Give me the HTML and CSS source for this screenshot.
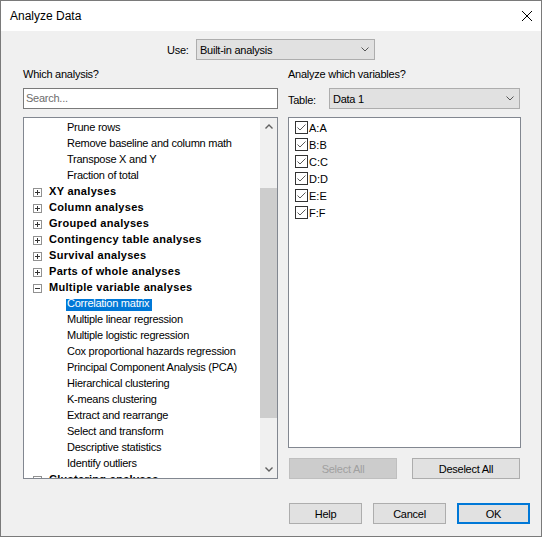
FILE: index.html
```html
<!DOCTYPE html>
<html lang="en">
<head>
<meta charset="UTF-8">
<meta name="viewport" content="width=device-width, initial-scale=1.0">
<title>Analyze Data</title>
<link rel="stylesheet" href="styles.css">
</head>
<body>
<svg class="defs" width="0" height="0">
  <symbol id="plus" viewBox="0 0 9 9">
    <rect x="0.5" y="0.5" width="8" height="8" fill="#fff" stroke="#919191"/>
    <path d="M2 4.5H7M4.5 2V7" stroke="#333"/>
  </symbol>
  <symbol id="minus" viewBox="0 0 9 9">
    <rect x="0.5" y="0.5" width="8" height="8" fill="#fff" stroke="#919191"/>
    <path d="M2 4.5H7" stroke="#333"/>
  </symbol>
  <symbol id="check" viewBox="0 0 13 13">
    <rect x="0.5" y="0.5" width="12" height="12" fill="#fff" stroke="#333"/>
    <path d="M2.5 6.5L5 9L10.5 3.5" fill="none" stroke="#5a5a5a"/>
  </symbol>
  <symbol id="chevron" viewBox="0 0 8 5">
    <path d="M0.5 0.5L4 4L7.5 0.5" fill="none" stroke="#555"/>
  </symbol>
</svg>

<div class="window">
  <div class="titlebar">
    <span class="title">Analyze Data</span>
    <svg class="close" width="10" height="10" viewBox="0 0 10 10"><path d="M0 0L10 10M10 0L0 10" stroke="#000"/></svg>
  </div>

  <div class="dialog">
    <div class="use-row">
      <span class="use-label">Use:</span>
      <div class="combo combo-use">
        <span>Built-in analysis</span>
        <svg width="8" height="5"><use href="#chevron"/></svg>
      </div>
    </div>

    <div class="columns">
      <div class="col-left">
        <div class="caption">Which analysis?</div>
        <div class="search">Search...</div>
        <div class="tree">
          <ul class="tree-items">
            <li class="child">Prune rows</li>
            <li class="child">Remove baseline and column math</li>
            <li class="child">Transpose X and Y</li>
            <li class="child">Fraction of total</li>
            <li class="group"><svg width="9" height="9"><use href="#plus"/></svg>XY analyses</li>
            <li class="group"><svg width="9" height="9"><use href="#plus"/></svg>Column analyses</li>
            <li class="group"><svg width="9" height="9"><use href="#plus"/></svg>Grouped analyses</li>
            <li class="group"><svg width="9" height="9"><use href="#plus"/></svg>Contingency table analyses</li>
            <li class="group"><svg width="9" height="9"><use href="#plus"/></svg>Survival analyses</li>
            <li class="group"><svg width="9" height="9"><use href="#plus"/></svg>Parts of whole analyses</li>
            <li class="group"><svg width="9" height="9"><use href="#minus"/></svg>Multiple variable analyses</li>
            <li class="child"><span class="selected">Correlation matrix</span></li>
            <li class="child">Multiple linear regression</li>
            <li class="child">Multiple logistic regression</li>
            <li class="child">Cox proportional hazards regression</li>
            <li class="child">Principal Component Analysis (PCA)</li>
            <li class="child">Hierarchical clustering</li>
            <li class="child">K-means clustering</li>
            <li class="child">Extract and rearrange</li>
            <li class="child">Select and transform</li>
            <li class="child">Descriptive statistics</li>
            <li class="child">Identify outliers</li>
            <li class="group"><svg width="9" height="9"><use href="#plus"/></svg>Clustering analyses</li>
          </ul>
          <div class="scrollbar">
            <div class="sb-btn"><svg width="8" height="5" viewBox="0 0 8 5"><path d="M0.5 4.5L4 1L7.5 4.5" fill="none" stroke="#606060" stroke-width="1.4"/></svg></div>
            <div class="sb-track"><div class="sb-thumb"></div></div>
            <div class="sb-btn"><svg width="8" height="5" viewBox="0 0 8 5"><path d="M0.5 0.5L4 4L7.5 0.5" fill="none" stroke="#606060" stroke-width="1.4"/></svg></div>
          </div>
        </div>
      </div>

      <div class="col-right">
        <div class="caption">Analyze which variables?</div>
        <div class="table-row">
          <span class="table-label">Table:</span>
          <div class="combo combo-table">
            <span>Data 1</span>
            <svg width="8" height="5"><use href="#chevron"/></svg>
          </div>
        </div>
        <div class="varlist">
          <div class="var"><svg width="13" height="13"><use href="#check"/></svg>A:A</div>
          <div class="var"><svg width="13" height="13"><use href="#check"/></svg>B:B</div>
          <div class="var"><svg width="13" height="13"><use href="#check"/></svg>C:C</div>
          <div class="var"><svg width="13" height="13"><use href="#check"/></svg>D:D</div>
          <div class="var"><svg width="13" height="13"><use href="#check"/></svg>E:E</div>
          <div class="var"><svg width="13" height="13"><use href="#check"/></svg>F:F</div>
        </div>
        <div class="list-buttons">
          <button class="btn btn-wide" disabled>Select All</button>
          <button class="btn btn-wide">Deselect All</button>
        </div>
      </div>
    </div>

    <div class="footer">
      <button class="btn">Help</button>
      <button class="btn">Cancel</button>
      <button class="btn btn-ok">OK</button>
    </div>
  </div>
</div>
</body>
</html>
```

FILE: styles.css
```css
* {
  box-sizing: border-box;
}
body {
  margin: 0;
  font-family: "Liberation Sans", Arial, sans-serif;
  font-size: 11px;
  color: #000;
  background: #fff;
}
.defs {
  position: absolute;
}
.window {
  width: 542px;
  height: 537px;
  border: 1px solid #7a7a7a;
  background: #f0f0f0;
  display: flex;
  flex-direction: column;
}
.titlebar {
  height: 30px;
  background: #fff;
  display: flex;
  align-items: center;
  padding-left: 9px;
}
.title {
  flex: 1;
  font-size: 12px;
}
.close {
  margin-right: 9px;
}
.dialog {
  flex: 1;
  padding-top: 8px;
}
.use-row {
  display: flex;
  align-items: center;
  height: 21px;
  padding-left: 166px;
}
.use-label {
  width: 29px;
  letter-spacing: -0.25px;
}
.combo {
  height: 21px;
  display: flex;
  align-items: center;
  justify-content: space-between;
  background: #e1e1e1;
  border: 1px solid #adadad;
  padding: 0 5px 0 3px;
  letter-spacing: -0.25px;
}
.combo-use {
  width: 179px;
}
.combo-table {
  width: 191px;
}
.columns {
  display: flex;
  gap: 10px;
  padding-left: 22px;
}
.col-left {
  width: 255px;
}
.col-right {
  width: 233px;
}
.caption {
  margin-top: 7px;
  height: 14px;
  line-height: 14px;
  letter-spacing: -0.25px;
}
.search {
  margin-top: 7px;
  height: 21px;
  line-height: 19px;
  border: 1px solid #7a7a7a;
  background: #fff;
  padding-left: 2px;
  color: #6d6d6d;
  letter-spacing: -0.25px;
}
.tree {
  margin-top: 8px;
  height: 362px;
  border: 1px solid #828790;
  background: #fff;
  display: flex;
  overflow: hidden;
}
.tree-items {
  flex: 1;
  list-style: none;
  margin: 0;
  padding: 1px 0 0 0;
  overflow: hidden;
}
.tree-items li {
  height: 16px;
  line-height: 16px;
  white-space: nowrap;
}
.child {
  padding-left: 43px;
  letter-spacing: -0.25px;
}
.group {
  display: flex;
  align-items: flex-start;
  padding-left: 9px;
  font-weight: bold;
  letter-spacing: 0.3px;
}
.group svg {
  display: block;
  margin: 5px 7px 0 0;
}
.selected {
  display: inline-block;
  height: 12px;
  line-height: 9px;
  margin-left: -1px;
  padding: 0 3px 0 1px;
  background: #0078d7;
  color: #fff;
}
.scrollbar {
  width: 17px;
  background: #f0f0f0;
  display: flex;
  flex-direction: column;
}
.sb-btn {
  height: 17px;
  display: flex;
  align-items: center;
  justify-content: center;
}
.sb-track {
  flex: 1;
}
.sb-thumb {
  margin-top: 53px;
  height: 230px;
  background: #cdcdcd;
}
.table-row {
  margin-top: 7px;
  height: 21px;
  display: flex;
  align-items: center;
}
.table-label {
  width: 41px;
  padding-top: 2px;
  letter-spacing: -0.25px;
}
.varlist {
  margin-top: 8px;
  height: 331px;
  border: 1px solid #828790;
  background: #fff;
  padding: 1px 0 0 6px;
}
.var {
  height: 17px;
  display: flex;
  align-items: center;
  gap: 1px;
}
.var svg {
  display: block;
}
.list-buttons {
  margin-top: 10px;
  display: flex;
  justify-content: space-between;
  padding: 0 1px;
}
.btn {
  width: 73px;
  height: 21px;
  padding: 0;
  font: inherit;
  color: #000;
  background: #e1e1e1;
  border: 1px solid #adadad;
  letter-spacing: -0.25px;
}
.btn-wide {
  width: 108px;
}
.btn:disabled {
  background: #cccccc;
  border-color: #bfbfbf;
  color: #a0a0a0;
}
.btn-ok {
  border: 2px solid #0078d7;
}
.footer {
  display: flex;
  justify-content: flex-end;
  gap: 11px;
  margin-top: 24px;
  padding-right: 11px;
}
```
